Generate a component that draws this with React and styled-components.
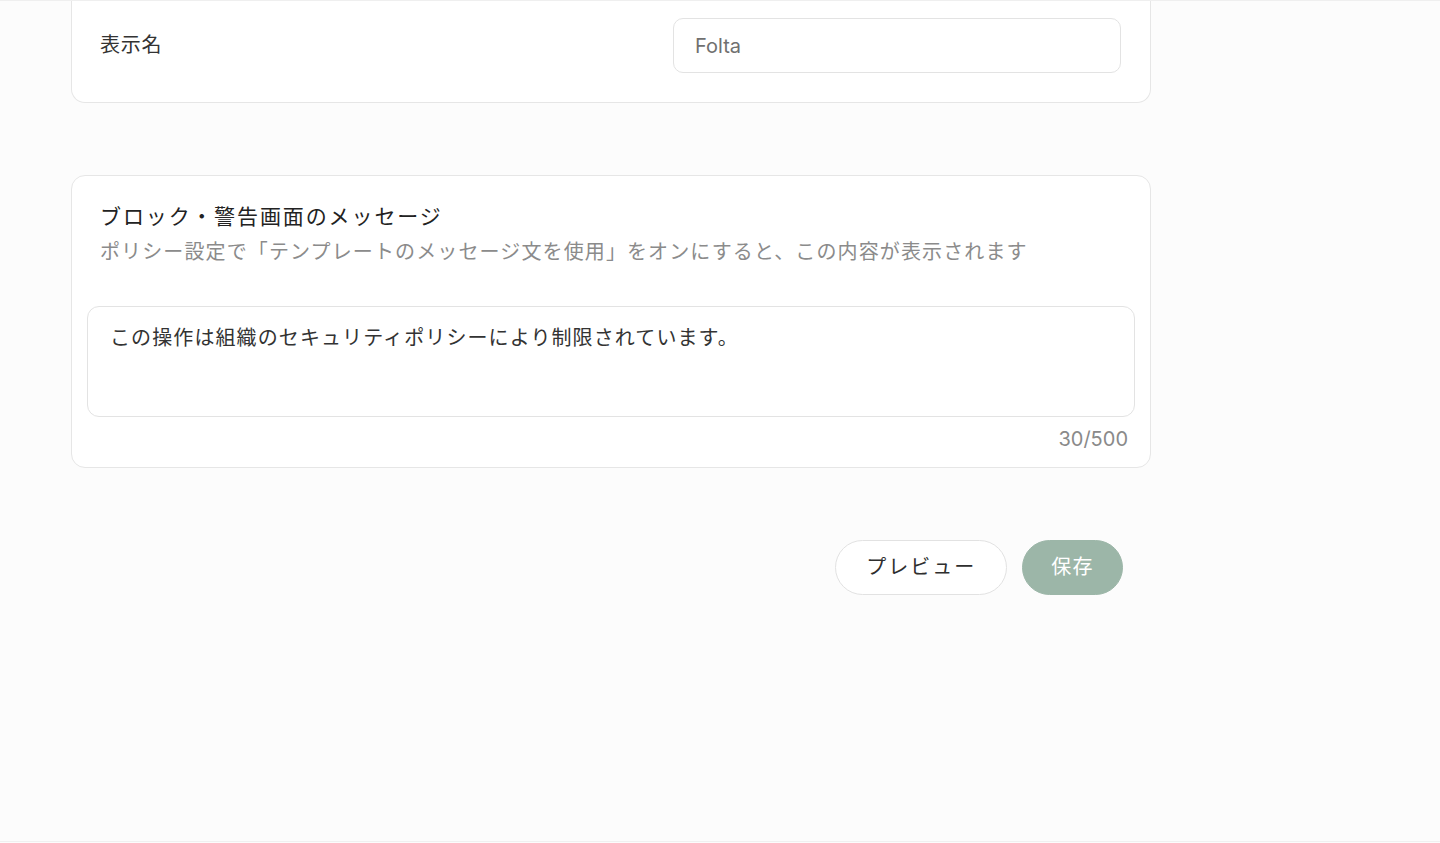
import React from 'react'
import styled, { createGlobalStyle } from 'styled-components'

const GlobalStyle = createGlobalStyle`
  html, body {
    margin: 0;
    padding: 0;
    background: #fcfcfc;
  }
  body {
    font-family: "Inter", "Noto Sans CJK JP", sans-serif;
    color: #2b2b2b;
    -webkit-font-smoothing: antialiased;
  }
`

const Page = styled.div`
  min-height: 842px;
  border-top: 1px solid #efefef;
  border-bottom: 1px solid #f0f0f0;
  padding-left: 71px;
  box-sizing: border-box;
`

const Column = styled.div`
  width: 1080px;
  display: flex;
  flex-direction: column;
`

const Card = styled.section`
  background: #ffffff;
  border: 1px solid #e6e6e6;
  border-radius: 14px;
  box-sizing: border-box;
  ${p => p.$cut && `
    border-top: none;
    border-top-left-radius: 0;
    border-top-right-radius: 0;
  `}
`

const FieldRow = styled(Card)`
  display: flex;
  align-items: center;
  justify-content: space-between;
  padding: 17px 29px 29px 28px;
`

const Label = styled.div`
  font-size: 20px;
  letter-spacing: 0.8px;
  color: #333333;
  margin-top: -4px;
`

const TextInput = styled.div`
  width: 448px;
  height: 55px;
  box-sizing: border-box;
  border: 1px solid #e3e3e3;
  border-radius: 10px;
  display: flex;
  align-items: center;
  padding: 0 21px;
  font-size: 20px;
  color: #707070;
`

const MessageCard = styled(Card)`
  margin-top: 72px;
  padding: 25px 15px 14px;
`

const Heading = styled.h2`
  margin: 0;
  padding: 0 13px;
  font-size: 21px;
  font-weight: 400;
  line-height: 32px;
  letter-spacing: 1.9px;
  color: #222222;
`

const Hint = styled.p`
  margin: 3px 0 0;
  padding: 0 13px;
  font-size: 20px;
  line-height: 32px;
  letter-spacing: 1.12px;
  color: #8b8b8b;
`

const TextArea = styled.div`
  margin-top: 38px;
  height: 111px;
  box-sizing: border-box;
  border: 1px solid #e3e3e3;
  border-radius: 12px;
  padding: 16px 22px 14px;
  font-size: 20px;
  line-height: 30px;
  letter-spacing: 1.1px;
  color: #333333;
`

const Counter = styled.div`
  text-align: right;
  padding-right: 7px;
  font-size: 20px;
  line-height: 28px;
  margin-top: 8px;
  color: #8a8a8a;
`

const Actions = styled.div`
  margin-top: 72px;
  padding-right: 28px;
  display: flex;
  justify-content: flex-end;
  gap: 15px;
`

const Button = styled.button`
  height: 55px;
  border-radius: 28px;
  font-family: inherit;
  font-size: 20px;
  letter-spacing: ${p => (p.$primary ? '1.4px' : '2px')};
  cursor: pointer;
  padding: 0 ${p => (p.$primary ? '28px' : '30px')} 4px;
  border: 1px solid ${p => (p.$primary ? '#9cb6a8' : '#e2e2e2')};
  background: ${p => (p.$primary ? '#9cb6a8' : '#ffffff')};
  color: ${p => (p.$primary ? '#ffffff' : '#2e2e2e')};
`

export default function App() {
  return (
    <>
      <GlobalStyle />
      <Page>
        <Column>
          <FieldRow $cut>
            <Label>表示名</Label>
            <TextInput>Folta</TextInput>
          </FieldRow>

          <MessageCard>
            <Heading>ブロック・警告画面のメッセージ</Heading>
            <Hint>ポリシー設定で「テンプレートのメッセージ文を使用」をオンにすると、この内容が表示されます</Hint>
            <TextArea>この操作は組織のセキュリティポリシーにより制限されています。</TextArea>
            <Counter>30/500</Counter>
          </MessageCard>

          <Actions>
            <Button>プレビュー</Button>
            <Button $primary>保存</Button>
          </Actions>
        </Column>
      </Page>
    </>
  )
}
